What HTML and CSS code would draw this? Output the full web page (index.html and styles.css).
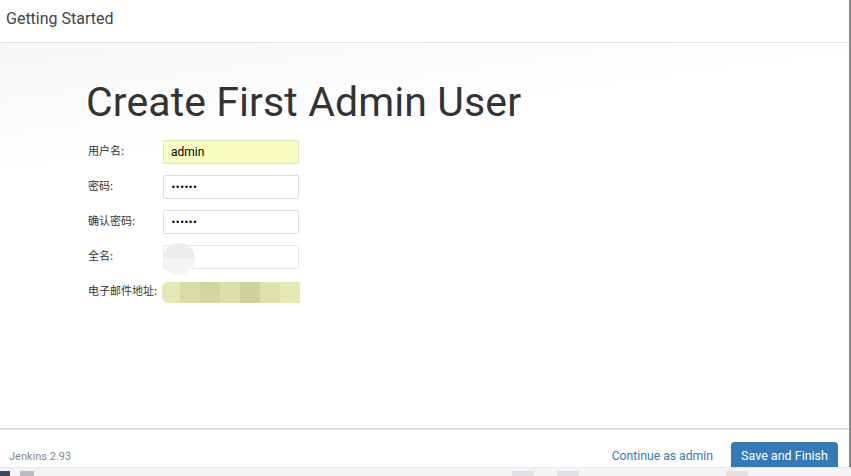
FILE: index.html
```html
<!DOCTYPE html>
<html>
<head>
<meta charset="utf-8">
<link rel="stylesheet" href="styles.css">
</head>
<body>
<div class="modal">
  <div class="header">Getting Started</div>
  <div class="content">
    <h1 class="title">Create First Admin User</h1>
    <div class="form">
      <div class="row"><label class="lbl">用户名:</label><div class="field autofill">admin</div></div>
      <div class="row"><label class="lbl">密码:</label><div class="field dots">••••••</div></div>
      <div class="row"><label class="lbl">确认密码:</label><div class="field dots">••••••</div></div>
      <div class="row"><label class="lbl">全名:</label><div class="field blurred"><span class="blob"></span></div></div>
      <div class="row"><label class="lbl">电子邮件地址:</label><div class="field mosaic"><span style="background:#e4e8b4"></span><span style="background:#d9dca4"></span><span style="background:#d4d79c"></span><span style="background:#dcdfa8"></span><span style="background:#cfd298"></span><span style="background:#dde2ab"></span><span style="background:#e6eab0"></span></div></div>
    </div>
  </div>
  <div class="footer">
    <span class="version">Jenkins 2.93</span>
    <div class="actions">
      <a class="link">Continue as admin</a>
      <button class="btn">Save and Finish</button>
    </div>
  </div>
</div>
<div class="strip">
  <span class="ico dark" style="left:0"></span>
  <span class="ico gray" style="left:20px"></span>
  <span class="ico lite" style="left:512px"></span>
  <span class="ico lite" style="left:557px"></span>
  <span class="ico lite" style="left:726px"></span>
</div>
</body>
</html>
```
FILE: styles.css
```css
html, body { margin: 0; padding: 0; }
body {
  width: 851px;
  height: 476px;
  overflow: hidden;
  background: #fff;
  font-family: Roboto, "Noto Sans CJK SC", sans-serif;
  position: relative;
}
.modal {
  width: 849px;
  height: 467px;
  border-right: 2px solid #8a8a8a;
  display: flex;
  flex-direction: column;
  background: #fff;
  overflow: hidden;
}
.header {
  height: 43px;
  box-sizing: border-box;
  border-bottom: 1px solid #e3e3e3;
  padding: 9px 0 0 6px;
  font-size: 16px;
  color: #444;
  flex: none;
}
.content {
  flex: 1;
  background: linear-gradient(172deg, #f6f6f6 0%, #fbfbfb 14%, #fff 26%, #fff 100%);
  padding: 0 0 0 86px;
}
.title {
  margin: 35px 0 0 0;
  font-family: Roboto, sans-serif;
  font-weight: 400;
  font-size: 41px;
  line-height: 48px;
  color: #333;
  letter-spacing: 0.1px;
}
.form {
  margin-top: 14px;
  display: flex;
  flex-direction: column;
  gap: 11px;
}
.row {
  display: flex;
  align-items: center;
  height: 24px;
}
.lbl {
  width: 75px;
  padding-left: 2px;
  font-family: "Noto Sans CJK SC", sans-serif;
  font-size: 11px;
  color: #333;
  margin-top: -4px;
}
.field {
  width: 136px;
  height: 24px;
  box-sizing: border-box;
  border: 1px solid #ddd;
  border-radius: 2px;
  background: #fff;
  font-size: 12px;
  color: #000;
  padding: 0 0 0 7px;
  line-height: 22px;
  position: relative;
}
.autofill { background: #fafdc0; border-color: #e2e4c0; }
.dots { font-family: "DejaVu Sans", sans-serif; font-size: 8px; letter-spacing: -0.4px; line-height: 23px; }
.blurred { border-color: #e6e6e6; }
.blob {
  position: absolute;
  left: -1px;
  top: -3px;
  width: 32px;
  height: 32px;
  border-radius: 50%;
  background: linear-gradient(to bottom, #ebeded 0%, #ebeded 48%, #f5f5f5 52%, #f5f5f5 100%);
}
.mosaic {
  display: flex;
  padding: 0;
  border: none;
  height: 21px;
  margin-left: -1px;
  width: 138px;
  overflow: hidden;
  border-radius: 6px 0 0 6px;
  margin-top: 1px;
}
.mosaic span { width: 20px; flex: none; height: 100%; }
.mosaic span:first-child { width: 18px; }
.footer {
  height: 37px;
  flex: none;
  border-top: 2px solid #e0e0e0;
  display: flex;
  align-items: flex-end;
  justify-content: space-between;
  padding: 0 11px 0 9px;
}
.version {
  font-size: 11px;
  color: #888;
  padding-bottom: 4px;
}
.actions {
  display: flex;
  align-items: flex-end;
  gap: 18px;
}
.link {
  color: #337ab7;
  font-size: 12.2px;
  padding-bottom: 4px;
}
.btn {
  width: 107px;
  height: 25px;
  border: none;
  border-radius: 4px 4px 0 0;
  background: #337ab7;
  color: #fff;
  font-family: Roboto, sans-serif;
  font-size: 12.5px;
  padding: 2px 0 0 0;
  margin: 0;
}
.strip {
  height: 9px;
  background: #f3f4f6;
  border-top: 1px solid #e6e7ea;
  position: relative;
}
.ico {
  position: absolute;
  top: 3px;
  width: 14px;
  height: 6px;
}
.ico.dark { background: #3a4a5c; width: 10px; }
.ico.gray { background: #b9bcc2; }
.ico.lite { background: #dfe1e5; width: 22px; }
```
